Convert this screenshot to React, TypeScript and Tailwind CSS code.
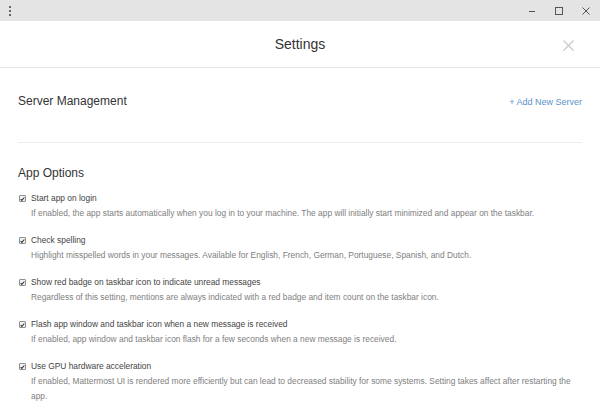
const options = [
  {
    label: "Start app on login",
    desc: "If enabled, the app starts automatically when you log in to your machine. The app will initially start minimized and appear on the taskbar.",
  },
  {
    label: "Check spelling",
    desc: "Highlight misspelled words in your messages. Available for English, French, German, Portuguese, Spanish, and Dutch.",
  },
  {
    label: "Show red badge on taskbar icon to indicate unread messages",
    desc: "Regardless of this setting, mentions are always indicated with a red badge and item count on the taskbar icon.",
  },
  {
    label: "Flash app window and taskbar icon when a new message is received",
    desc: "If enabled, app window and taskbar icon flash for a few seconds when a new message is received.",
  },
  {
    label: "Use GPU hardware acceleration",
    desc: "If enabled, Mattermost UI is rendered more efficiently but can lead to decreased stability for some systems. Setting takes affect after restarting the app.",
  },
];

function Check() {
  return (
    <span className="flex h-[7px] w-[7px] shrink-0 items-center justify-center rounded-[1px] border border-[#8f8f8f] bg-[#f3f3f3]">
      <svg width="6" height="6" viewBox="0 0 6 6" fill="none" stroke="#333" strokeWidth="1.3">
        <path d="M0.8 3.1l1.4 1.5L5.2 1.2" />
      </svg>
    </span>
  );
}

export default function App() {
  return (
    <div
      className="flex h-[420px] w-[600px] flex-col overflow-hidden bg-white text-[#333]"
      style={{ fontFamily: '"Liberation Sans", Arial, sans-serif' }}
    >
      {/* Window title bar */}
      <div className="flex h-[21px] shrink-0 items-center justify-between bg-[#e4e4e4] pl-[9px] pr-[10px]">
        <div className="flex flex-col gap-[2px]">
          <span className="h-[2px] w-[2px] bg-[#666]" />
          <span className="h-[2px] w-[2px] bg-[#666]" />
          <span className="h-[2px] w-[2px] bg-[#666]" />
        </div>
        <div className="flex items-center gap-[19px] text-[#555]">
          <svg width="8" height="8" viewBox="0 0 8 8" stroke="currentColor" strokeWidth="1">
            <path d="M1 4.5h6" />
          </svg>
          <svg width="8" height="8" viewBox="0 0 8 8" fill="none" stroke="currentColor" strokeWidth="1">
            <rect x="0.5" y="0.5" width="7" height="7" />
          </svg>
          <svg width="8" height="8" viewBox="0 0 8 8" stroke="currentColor" strokeWidth="1">
            <path d="M0.5 0.5l7 7M7.5 0.5l-7 7" />
          </svg>
        </div>
      </div>

      {/* Modal header */}
      <div className="relative flex h-[47px] shrink-0 items-center justify-center border-b border-[#e6e6e6]">
        <h1 className="text-[14px] leading-none text-[#333]">Settings</h1>
        <svg
          className="absolute right-[26px] top-[19px]"
          width="11"
          height="11"
          viewBox="0 0 11 11"
          stroke="#c8c8c8"
          strokeWidth="1.2"
        >
          <path d="M0.5 0.5l10 10M10.5 0.5l-10 10" />
        </svg>
      </div>

      <div className="px-[18px]">
        {/* Server management */}
        <div className="flex items-center justify-between border-b border-[#ececec] pb-[32px] pt-[23px]">
          <h2 className="text-[12px] leading-[16px] text-[#333]">Server Management</h2>
          <span className="mt-[3px] text-[9px] leading-[16px] text-[#5a93cc]">+ Add New Server</span>
        </div>

        {/* App options */}
        <h2 className="mt-[22px] text-[12px] leading-[16px] text-[#333]">App Options</h2>
        <div className="mt-[10px] flex flex-col gap-[12px]">
          {options.map((o) => (
            <div key={o.label}>
              <div className="flex h-[15px] items-center gap-[5px] pl-[1px]">
                <Check />
                <span className="text-[8.4px] text-[#444]">{o.label}</span>
              </div>
              <p className="pl-[13px] text-[8.4px] leading-[15px] text-[#808080]">{o.desc}</p>
            </div>
          ))}
        </div>
      </div>
    </div>
  );
}
